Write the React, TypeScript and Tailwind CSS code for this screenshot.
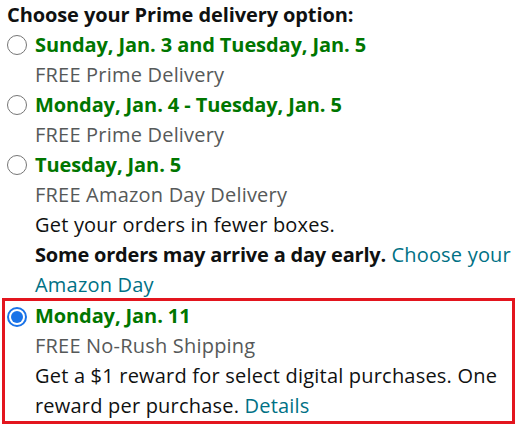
import React from "react";

type Option = {
  date: string;
  label: string;
  selected?: boolean;
  extra?: React.ReactNode;
};

function Radio({ checked }: { checked?: boolean }) {
  return checked ? (
    <span className="mt-[6px] flex h-[20px] w-[20px] shrink-0 items-center justify-center rounded-full border-2 border-[#1a73e8] bg-white">
      <span className="h-[12px] w-[12px] rounded-full bg-[#1a73e8]" />
    </span>
  ) : (
    <span className="mt-[5px] h-[20px] w-[20px] shrink-0 rounded-full border border-[#767676] bg-white" />
  );
}

const options: Option[] = [
  { date: "Sunday, Jan. 3 and Tuesday, Jan. 5", label: "FREE Prime Delivery" },
  { date: "Monday, Jan. 4 - Tuesday, Jan. 5", label: "FREE Prime Delivery" },
  {
    date: "Tuesday, Jan. 5",
    label: "FREE Amazon Day Delivery",
    extra: (
      <>
        <div className="text-[#0f1111]">Get your orders in fewer boxes.</div>
        <div className="whitespace-nowrap text-[#0f1111]">
          <span className="font-bold tracking-[-0.2px]">Some orders may arrive a day early.</span>{" "}
          <span className="text-[#007185]">Choose your</span>
        </div>
        <div className="text-[#007185]">Amazon Day</div>
      </>
    ),
  },
  {
    date: "Monday, Jan. 11",
    label: "FREE No-Rush Shipping",
    selected: true,
    extra: (
      <>
        <div className="whitespace-nowrap text-[#0f1111]">
          Get a $1 reward for select digital purchases. One
        </div>
        <div className="text-[#0f1111]">
          reward per purchase. <span className="text-[#007185]">Details</span>
        </div>
      </>
    ),
  },
];

export default function App() {
  return (
    <div
      className="h-[426px] w-[518px] overflow-hidden bg-white text-[20px] leading-[30px] tracking-[0.2px] text-[#0f1111]"
      style={{ fontFamily: '"Open Sans", sans-serif' }}
    >
      <div className="pl-[7px] font-bold tracking-[-0.1px]">Choose your Prime delivery option:</div>
      {options.map((o) => (
        <div
          key={o.date}
          className={
            o.selected
              ? "ml-[2px] mr-[3px] mt-[-2px] flex gap-[8px] border-[3px] border-[#e3151e] pl-[2px] pr-[4px]"
              : "flex gap-[8px] pl-[7px] pr-[6px]"
          }
        >
          <Radio checked={o.selected} />
          <div className="min-w-0">
            <div className="font-bold tracking-[-0.1px] text-[#007600]">{o.date}</div>
            <div className="text-[#565959]">{o.label}</div>
            {o.extra}
          </div>
        </div>
      ))}
    </div>
  );
}
